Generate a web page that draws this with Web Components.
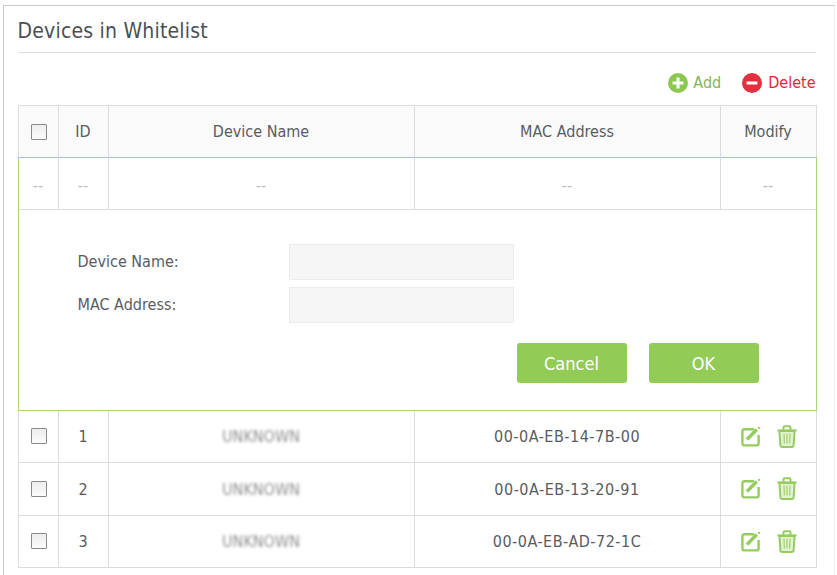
<!DOCTYPE html>
<html><head><meta charset="utf-8">
<style>
html,body{margin:0;padding:0;background:#fff;overflow:hidden}
body{font-family:"DejaVu Sans Condensed","DejaVu Sans",sans-serif;font-stretch:condensed;color:#555;height:575px}
</style></head><body>
<wl-card heading="Devices in Whitelist">
  <wl-toolbar></wl-toolbar>
  <wl-table>
    <wl-row kind="head"><wl-check></wl-check><span>ID</span><span>Device Name</span><span>MAC Address</span><span>Modify</span></wl-row>
    <wl-editor></wl-editor>
    <wl-row><wl-check></wl-check><span class="t">1</span><span class="t"><wl-blur>UNKNOWN</wl-blur></span><span class="t m">00-0A-EB-14-7B-00</span><wl-actions></wl-actions></wl-row>
    <wl-row><wl-check></wl-check><span class="t">2</span><span class="t"><wl-blur>UNKNOWN</wl-blur></span><span class="t m">00-0A-EB-13-20-91</span><wl-actions></wl-actions></wl-row>
    <wl-row kind="last"><wl-check></wl-check><span class="t">3</span><span class="t"><wl-blur>UNKNOWN</wl-blur></span><span class="t m">00-0A-EB-AD-72-1C</span><wl-actions></wl-actions></wl-row>
  </wl-table>
</wl-card>
<script>
function def(name, html, init){
  customElements.define(name, class extends HTMLElement{
    constructor(){super();this.attachShadow({mode:'open'}).innerHTML=html;}
    connectedCallback(){ if(init) init(this); }
  });
}
const FONT='"DejaVu Sans Condensed","DejaVu Sans",sans-serif';
def('wl-card',`<style>
:host{display:block;box-sizing:border-box;margin:5px 0 0 3px;height:570px;width:832px;border:solid #c9c9c9;border-width:1px 1px 0 1.5px;border-right-color:#f0f0f0;padding:0 18px 0 13.5px;font-family:${FONT};font-stretch:condensed}
h2{margin:0;height:47px;box-sizing:border-box;border-bottom:1px solid #dcdcdc;font:400 21px/50px ${FONT};font-stretch:condensed;color:#4a4f55;letter-spacing:.2px}
</style><h2></h2><slot></slot>`,el=>{el.shadowRoot.querySelector('h2').textContent=el.getAttribute('heading')});

def('wl-toolbar',`<style>
:host{display:flex;justify-content:flex-end;align-items:center;height:52px;gap:21px;padding-right:.5px;font:400 16px/20px ${FONT};font-stretch:condensed}
a{display:flex;align-items:center;gap:5px;margin-top:7px}
.del{gap:6px}
.add{color:#83b35a}.del{color:#e3263a}
svg{display:block}
</style>
<a class="add"><svg width="20" height="20" viewBox="0 0 20 20"><circle cx="10" cy="10" r="10" fill="#8cc751"/><path d="M10 4.6v10.8M4.6 10h10.8" stroke="#fff" stroke-width="3"/></svg>Add</a>
<a class="del"><svg width="20" height="20" viewBox="0 0 20 20"><circle cx="10" cy="10" r="10" fill="#e3303f"/><path d="M4.6 10h10.8" stroke="#fff" stroke-width="3"/></svg>Delete</a>`);

def('wl-table',`<style>
:host{display:block;border:1px solid #dcdcdc;width:799px;box-sizing:border-box}
::slotted(wl-row:last-child){height:51.5px}
</style><slot></slot>`);

def('wl-blur',`<style>
:host{display:block;filter:blur(1.7px);color:#8f8f8f}
</style><slot></slot>`);

const ROW=`:host{display:grid;grid-template-columns:39px 50px 306px 306px 1fr;height:52.5px;box-sizing:border-box;border-bottom:1px solid #dcdcdc;font:400 16px/1 ${FONT};font-stretch:condensed;color:#585c62}`;
def('wl-row',`<style>${ROW}
:host([kind=head]){height:52px;background:#fafafa;border-bottom:0}
:host([kind=last]){border-bottom:0}
::slotted(*){display:flex;align-items:center;justify-content:center;border-left:1px solid #dcdcdc;min-width:0}
::slotted(:first-child){border-left:0}
::slotted(.t){padding-top:2px}
::slotted(.m){letter-spacing:.5px}
</style><slot></slot>`);

def('wl-check',`<style>
:host{display:flex;align-items:center;justify-content:center}
i{display:block;width:16px;height:16px;box-sizing:border-box;border:1.5px solid #8a8a8a;background:linear-gradient(#ededed,#fbfbfb);border-radius:1px;margin-left:1px}
</style><i></i>`);

def('wl-actions',`<style>
:host{display:flex;align-items:center;justify-content:center;gap:16px;padding-left:1.5px}
svg{display:block}
.e{margin-top:1px}
</style>
<svg class="e" width="20" height="20" viewBox="0 0 20 20" fill="none" stroke="#95cc5f"><path d="M13 2.200H3.200A1.800 1.800 0 0 0 1.400 4v12.600a1.800 1.800 0 0 0 1.800 1.800h12.600a1.800 1.800 0 0 0 1.800-1.800V8" stroke-width="2.400"/><path d="M6 12.500l9.800-10" stroke-width="3.400"/><path d="M17.400 1.500l1.400-1.400" stroke-width="2.400"/></svg>
<svg width="20" height="23" viewBox="0 0 20 23" fill="none" stroke="#95cc5f"><path d="M.4 5.400h19.200" stroke-width="2"/><path d="M6.500 5V2.400q0-1.200 1.200-1.200h4.600q1.200 0 1.200 1.200V5" stroke-width="2"/><path d="M2.400 6l1 14.200q.1 1.800 1.900 1.800h9.400q1.800 0 1.900-1.800l1-14.200z" fill="#e4f2d4" stroke-width="2"/><path d="M7 8.500l.4 10M10 8.500v10M13 8.500l-.4 10" stroke-width="1.300" opacity=".8"/></svg>`);

def('wl-editor',`<style>
:host{display:block;box-sizing:border-box;height:253.5px;margin:-1px -1px 0;border:1.5px solid #a6d67c;font:400 16px/1 ${FONT};font-stretch:condensed;color:#585c62}
.dash{display:grid;grid-template-columns:39px 50px 306px 306px 1fr;height:52px;box-sizing:border-box;border-bottom:1px solid #dcdcdc;color:#bdbdbd}
.dash span{display:flex;align-items:center;justify-content:center;border-left:1px solid #dcdcdc;padding-top:4px}
.dash span:first-child{border-left:0}
form{display:grid;grid-template-columns:211px 225px;grid-auto-rows:36px;row-gap:7px;padding:34px 0 0 59px;align-items:center}
input{box-sizing:border-box;width:225px;height:36px;background:#f6f6f6;border:1px solid #ececec;margin:0;padding:0}
.btns{display:flex;justify-content:flex-end;gap:22px;padding:20px 57px 0 0}
button{width:110px;height:40px;border:0;border-radius:3px;background:#92cb55;color:#fff;font:400 18px ${FONT};font-stretch:condensed;padding:0}
</style>
<div class="dash"><span>--</span><span>--</span><span>--</span><span>--</span><span>--</span></div>
<form><label>Device Name:</label><input><label>MAC Address:</label><input></form>
<div class="btns"><button>Cancel</button><button>OK</button></div>`);
</script>
</body></html>
